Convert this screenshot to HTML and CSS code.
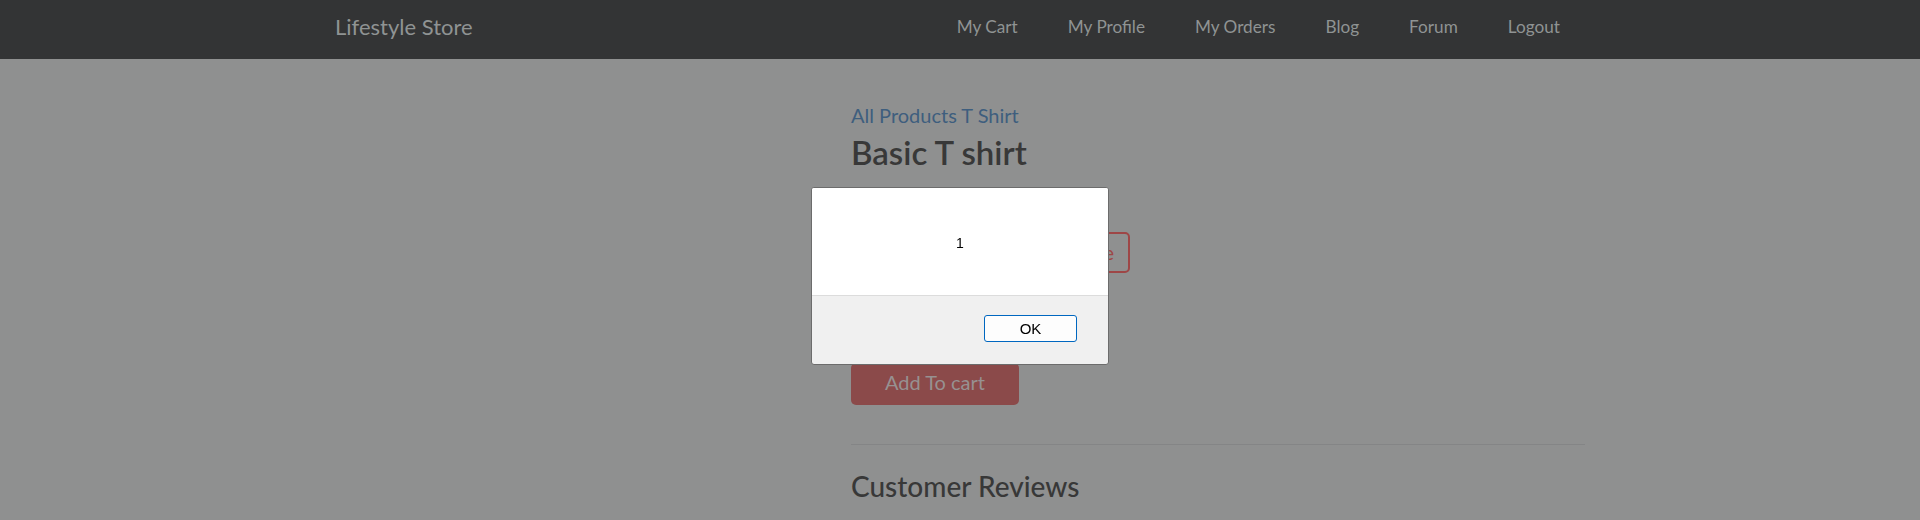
FILE: index.html
```html
<!DOCTYPE html>
<html lang="en">
<head>
<meta charset="utf-8">
<title>Basic T shirt - Lifestyle Store</title>
<link rel="stylesheet" href="styles.css">
</head>
<body>
<header class="navbar">
  <div class="container nav-inner">
    <a class="brand" href="#">Lifestyle Store</a>
    <nav class="nav-links">
      <a href="#">My Cart</a>
      <a href="#">My Profile</a>
      <a href="#">My Orders</a>
      <a href="#">Blog</a>
      <a href="#">Forum</a>
      <a href="#">Logout</a>
    </nav>
  </div>
</header>

<main class="container product">
  <div class="product-image"></div>
  <div class="product-info">
    <div class="breadcrumb"><a href="#">All Products</a> <a href="#">T Shirt</a></div>
    <h1 class="title">Basic T shirt</h1>
    <p class="subtitle">all sizes available</p>
    <div class="sizes">
      <button class="size-btn">Small</button>
      <button class="size-btn">Medium</button>
      <button class="size-btn">Large</button>
    </div>
    <p class="price">Rs. 499</p>
    <button class="cart-btn">Add To cart</button>
    <hr class="divider">
    <h2 class="reviews">Customer Reviews</h2>
  </div>
</main>

<div class="alert" role="alertdialog">
  <div class="alert-body">1</div>
  <div class="alert-footer">
    <button class="ok-btn">OK</button>
  </div>
</div>
</body>
</html>
```

FILE: styles.css
```css
html, body {
  margin: 0;
  padding: 0;
}

body {
  background: #8f9090;
  font-family: "Lato", "Open Sans", sans-serif;
  color: #3a3a3a;
  height: 520px;
  overflow: hidden;
}

.container {
  width: 1280px;
  margin: 0 auto;
  box-sizing: border-box;
  padding: 0 15px;
}

.navbar {
  background: #333435;
  height: 59px;
}

.nav-inner {
  display: flex;
  align-items: center;
  justify-content: space-between;
  height: 100%;
}

.brand {
  color: #8f9393;
  text-decoration: none;
  font-size: 22px;
  padding-bottom: 7px;
}

.nav-links {
  display: flex;
  align-items: center;
  padding-bottom: 6px;
}

.nav-links a {
  color: #8f9393;
  text-decoration: none;
  font-size: 17.2px;
  padding: 0 25px;
}

.product {
  display: grid;
  grid-template-columns: 501px 1fr;
  column-gap: 15px;
  padding-top: 42px;
}

.breadcrumb {
  font-size: 20px;
  line-height: 28px;
}

.breadcrumb a {
  color: #3e5e7e;
  text-decoration: none;
}

.title {
  font-size: 33px;
  font-weight: 600;
  line-height: 40px;
  margin: 3px 0 0;
  color: #383838;
}

.subtitle {
  font-size: 20px;
  line-height: 28px;
  margin: 7px 0 0;
  color: #3a3a3a;
}

.sizes {
  display: flex;
  gap: 8px;
  margin-top: 25px;
}

.size-btn {
  font-family: inherit;
  font-size: 20px;
  line-height: 25px;
  padding: 6px 14px;
  background: transparent;
  border: 2px solid #9e4646;
  border-radius: 5px;
  color: #9e4646;
}

.price {
  font-size: 20px;
  line-height: 28px;
  margin: 21px 0 0;
}

.cart-btn {
  display: block;
  font-family: inherit;
  font-size: 20px;
  line-height: 28px;
  padding: 5px 0 9px;
  margin-top: 41px;
  background: #8b4a4a;
  color: #979191;
  border: none;
  border-radius: 5px;
  width: 168px;
}

.divider {
  border: none;
  border-top: 1px solid #848586;
  margin: 39px 0 0;
}

.reviews {
  font-size: 28px;
  font-weight: 500;
  line-height: 36px;
  margin: 23px 0 0;
  color: #383838;
}

/* browser alert dialog */
.alert {
  position: fixed;
  left: calc(50% - 149px);
  top: 187px;
  width: 296px;
  border: 1px solid #6c6c6c;
  border-radius: 3px;
  background: #f0f0f0;
  font-family: "Liberation Sans", Arial, sans-serif;
  overflow: hidden;
}

.alert-body {
  background: #ffffff;
  height: 108px;
  border-bottom: 1px solid #dcdcdc;
  text-align: center;
  font-size: 14px;
  line-height: 16px;
  padding-top: 47px;
  box-sizing: border-box;
  color: #000;
}

.alert-footer {
  display: flex;
  justify-content: flex-end;
  height: 68px;
  padding: 19px 31px 0 0;
  box-sizing: border-box;
}

.ok-btn {
  width: 93px;
  height: 27px;
  border: 1px solid #0067c0;
  border-radius: 3px;
  background: #fdfdfd;
  font-family: "Liberation Sans", Arial, sans-serif;
  font-size: 15px;
  color: #000;
  padding: 0;
}
```
